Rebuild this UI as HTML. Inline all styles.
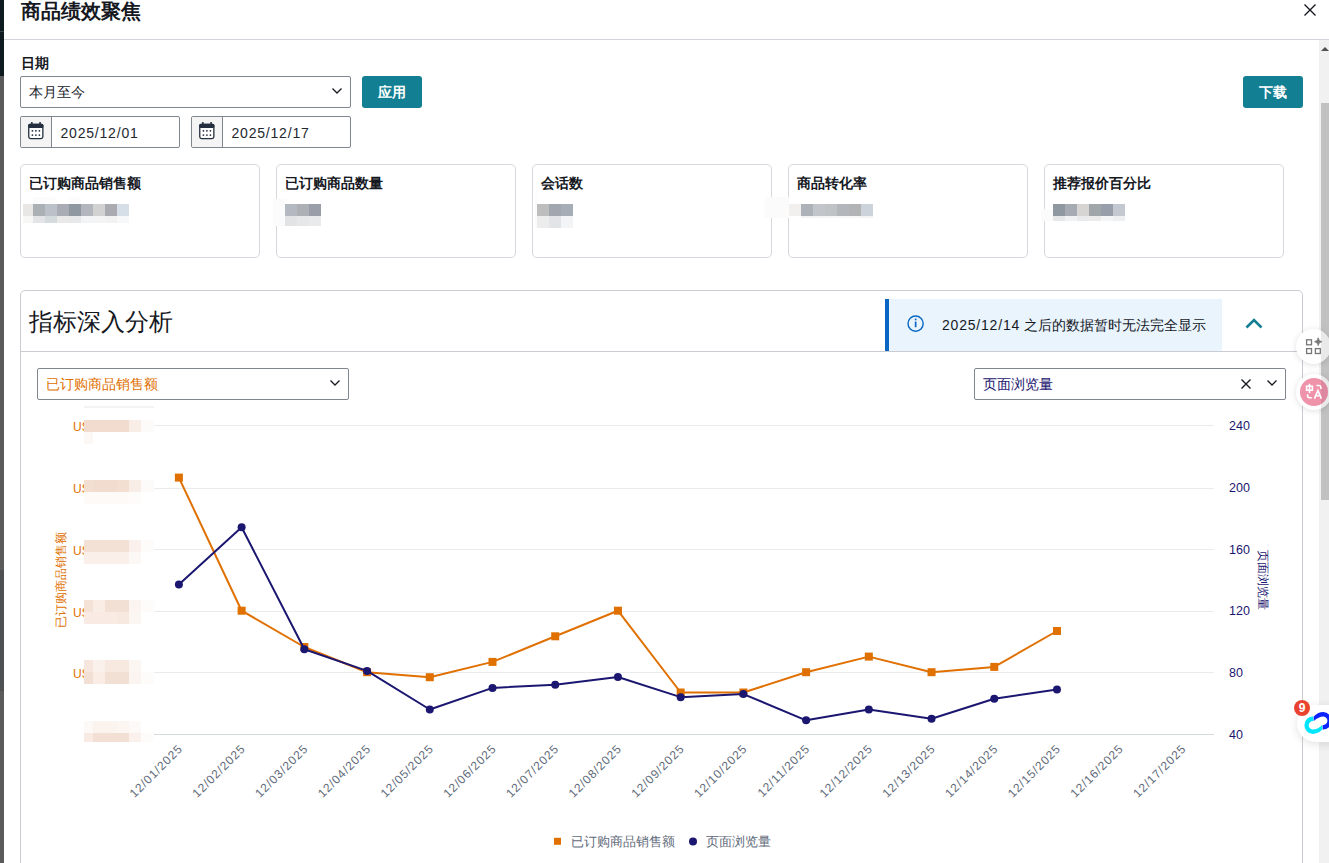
<!DOCTYPE html>
<html><head><meta charset="utf-8">
<style>
*{box-sizing:border-box;margin:0;padding:0}
html,body{width:1329px;height:863px;overflow:hidden;background:#fff;font-family:"Liberation Sans",sans-serif;color:#16191f}
.a{position:absolute}
.t{position:absolute;white-space:nowrap;line-height:1}
.box{position:absolute;border:1px solid #7f868f;border-radius:2px;background:#fff}
.btn{position:absolute;background:#137f92;border-radius:3px;color:#fff;font-weight:700;font-size:14px;line-height:32px;text-align:center}
.card{position:absolute;top:164px;width:240px;height:94px;border:1px solid #d5d9de;border-radius:5px;background:#fff}
.card .ct{position:absolute;left:8px;top:11px;font-size:14px;font-weight:700;line-height:1;white-space:nowrap}
.px{position:absolute}
</style></head><body>
<!-- left dark strip -->
<div class="a" style="left:0;top:0;width:4px;height:76px;background:#0d1b20"></div>
<div class="a" style="left:0;top:31px;width:4px;height:1px;background:#34434a"></div>
<div class="a" style="left:0;top:76px;width:4px;height:787px;background:#5b5b5c"></div>
<div class="a" style="left:0;top:570px;width:4px;height:121px;background:#4f5051"></div>

<!-- header -->
<div class="t" style="left:21px;top:1.5px;font-size:19.5px;font-weight:700;color:#16191f">商品绩效聚焦</div>
<div class="a" style="left:4px;top:39px;width:1325px;height:1px;background:#d1d5db"></div>
<svg class="a" style="left:1303px;top:3px" width="14" height="14" viewBox="0 0 14 14"><path d="M1.5 1.5L12.5 12.5M12.5 1.5L1.5 12.5" stroke="#16191f" stroke-width="1.4"/></svg>

<!-- date -->
<div class="t" style="left:21px;top:55.5px;font-size:14px;font-weight:700">日期</div>
<div class="box" style="left:20px;top:76px;width:331px;height:32px"></div>
<div class="t" style="left:29px;top:85px;font-size:14px">本月至今</div>
<svg class="a" style="left:331px;top:86px" width="12" height="9" viewBox="0 0 12 9"><path d="M1.5 2.5L6 7L10.5 2.5" fill="none" stroke="#16191f" stroke-width="1.3"/></svg>
<div class="btn" style="left:362px;top:76px;width:60px;height:32px">应用</div>
<div class="btn" style="left:1243px;top:76px;width:60px;height:32px">下载</div>

<div class="box" style="left:20px;top:116px;width:160px;height:32px;overflow:hidden"><div class="a" style="left:0;top:0;width:31px;height:30px;background:#f4f4f4;border-right:1px solid #7f868f"></div></div>
<div class="box" style="left:191px;top:116px;width:160px;height:32px;overflow:hidden"><div class="a" style="left:0;top:0;width:31px;height:30px;background:#f4f4f4;border-right:1px solid #7f868f"></div></div>
<svg class="a" style="left:26px;top:120px" width="20" height="22" viewBox="26 120 20 22"><rect x="28.75" y="124.35" width="14.1" height="14.2" rx="1.8" fill="#fff" stroke="#232f3e" stroke-width="1.3"/><rect x="28.2" y="123.8" width="15.2" height="4.3" rx="1.5" fill="#232f3e"/><rect x="31.1" y="122" width="1.5" height="2.5" fill="#232f3e"/><rect x="39.3" y="122" width="1.5" height="2.5" fill="#232f3e"/><g fill="#232f3e"><circle cx="32.4" cy="130.8" r="0.9"/><circle cx="35.9" cy="130.8" r="0.9"/><circle cx="39.4" cy="130.8" r="0.9"/><circle cx="32.4" cy="135.1" r="0.9"/><circle cx="35.9" cy="135.1" r="0.9"/><circle cx="39.4" cy="135.1" r="0.9"/></g></svg>
<svg class="a" style="left:197px;top:120px" width="20" height="22" viewBox="26 120 20 22"><rect x="28.75" y="124.35" width="14.1" height="14.2" rx="1.8" fill="#fff" stroke="#232f3e" stroke-width="1.3"/><rect x="28.2" y="123.8" width="15.2" height="4.3" rx="1.5" fill="#232f3e"/><rect x="31.1" y="122" width="1.5" height="2.5" fill="#232f3e"/><rect x="39.3" y="122" width="1.5" height="2.5" fill="#232f3e"/><g fill="#232f3e"><circle cx="32.4" cy="130.8" r="0.9"/><circle cx="35.9" cy="130.8" r="0.9"/><circle cx="39.4" cy="130.8" r="0.9"/><circle cx="32.4" cy="135.1" r="0.9"/><circle cx="35.9" cy="135.1" r="0.9"/><circle cx="39.4" cy="135.1" r="0.9"/></g></svg>
<div class="t" style="left:60.5px;top:126px;font-size:14px;letter-spacing:0.8px;color:#232830">2025/12/01</div>
<div class="t" style="left:231.5px;top:126px;font-size:14px;letter-spacing:0.8px;color:#232830">2025/12/17</div>

<!-- cards -->
<div class="card" style="left:20px"><div class="ct">已订购商品销售额</div></div>
<div class="card" style="left:276px"><div class="ct">已订购商品数量</div></div>
<div class="card" style="left:532px"><div class="ct">会话数</div></div>
<div class="card" style="left:788px"><div class="ct">商品转化率</div></div>
<div class="card" style="left:1044px"><div class="ct">推荐报价百分比</div></div>

<!-- analysis section -->
<div class="a" style="left:20px;top:290px;width:1283px;height:600px;border:1px solid #c9ccd1;border-radius:5px"></div>
<div class="a" style="left:21px;top:351px;width:1281px;height:1px;background:#c9ccd1"></div>
<div class="t" style="left:29px;top:309.5px;font-size:24px;color:#16191f">指标深入分析</div>
<div class="a" style="left:885px;top:299px;width:337px;height:52px;background:#e9f4fd;border-left:4px solid #0766c4"></div>
<svg class="a" style="left:906px;top:314px" width="20" height="20" viewBox="906 314 20 20"><circle cx="915.6" cy="323.6" r="7.6" fill="none" stroke="#0766c4" stroke-width="1.4"/><rect x="914.8" y="321.6" width="1.7" height="5.6" fill="#0766c4"/><rect x="914.8" y="318.6" width="1.7" height="1.7" fill="#0766c4"/></svg>
<div class="t" style="left:942px;top:318px;font-size:14px"><span style="letter-spacing:0.8px">2025/12/14</span> 之后的数据暂时无法完全显示</div>
<svg class="a" style="left:1244px;top:316px" width="20" height="14" viewBox="0 0 20 14"><path d="M2.5 11.5L10 4L17.5 11.5" fill="none" stroke="#137f92" stroke-width="2.6"/></svg>

<div class="box" style="left:37px;top:368px;width:312px;height:32px"></div>
<div class="t" style="left:46px;top:377px;font-size:14px;color:#e07000">已订购商品销售额</div>
<svg class="a" style="left:329px;top:378px" width="12" height="9" viewBox="0 0 12 9"><path d="M1.5 2.5L6 7L10.5 2.5" fill="none" stroke="#16191f" stroke-width="1.3"/></svg>
<div class="box" style="left:974px;top:368px;width:312px;height:32px"></div>
<div class="t" style="left:983px;top:377px;font-size:14px;color:#1b1670">页面浏览量</div>
<svg class="a" style="left:1240px;top:378px" width="12" height="12" viewBox="0 0 12 12"><path d="M1.5 1.5L10.5 10.5M10.5 1.5L1.5 10.5" stroke="#16191f" stroke-width="1.4"/></svg>
<svg class="a" style="left:1266px;top:378px" width="12" height="9" viewBox="0 0 12 9"><path d="M1.5 2.5L6 7L10.5 2.5" fill="none" stroke="#16191f" stroke-width="1.3"/></svg>

<svg class="a" style="left:0;top:0" width="1329" height="863" viewBox="0 0 1329 863">
<rect x="154" y="425" width="1060" height="1" fill="#e9ebed"/>
<rect x="154" y="488" width="1060" height="1" fill="#e9ebed"/>
<rect x="154" y="549" width="1060" height="1" fill="#e9ebed"/>
<rect x="154" y="611" width="1060" height="1" fill="#e9ebed"/>
<rect x="154" y="672" width="1060" height="1" fill="#e9ebed"/>
<rect x="154" y="734" width="1060" height="1" fill="#d5dbdb"/>
<polyline points="178.90,477.60 241.62,610.70 304.34,647.00 367.06,672.20 429.78,677.20 492.50,661.90 555.22,636.30 617.94,610.70 680.66,692.50 743.38,692.50 806.10,672.20 868.82,656.60 931.54,672.20 994.26,666.90 1056.98,631.00" fill="none" stroke="#e07000" stroke-width="2" stroke-linejoin="round"/>
<rect x="174.90" y="473.60" width="8" height="8" fill="#e07000"/>
<rect x="237.62" y="606.70" width="8" height="8" fill="#e07000"/>
<rect x="300.34" y="643.00" width="8" height="8" fill="#e07000"/>
<rect x="363.06" y="668.20" width="8" height="8" fill="#e07000"/>
<rect x="425.78" y="673.20" width="8" height="8" fill="#e07000"/>
<rect x="488.50" y="657.90" width="8" height="8" fill="#e07000"/>
<rect x="551.22" y="632.30" width="8" height="8" fill="#e07000"/>
<rect x="613.94" y="606.70" width="8" height="8" fill="#e07000"/>
<rect x="676.66" y="688.50" width="8" height="8" fill="#e07000"/>
<rect x="739.38" y="688.50" width="8" height="8" fill="#e07000"/>
<rect x="802.10" y="668.20" width="8" height="8" fill="#e07000"/>
<rect x="864.82" y="652.60" width="8" height="8" fill="#e07000"/>
<rect x="927.54" y="668.20" width="8" height="8" fill="#e07000"/>
<rect x="990.26" y="662.90" width="8" height="8" fill="#e07000"/>
<rect x="1052.98" y="627.00" width="8" height="8" fill="#e07000"/>
<polyline points="178.90,584.43 241.62,527.30 304.34,649.28 367.06,670.90 429.78,709.50 492.50,687.88 555.22,684.79 617.94,677.07 680.66,697.14 743.38,694.06 806.10,720.30 868.82,709.50 931.54,718.76 994.26,698.69 1056.98,689.42" fill="none" stroke="#1b1670" stroke-width="2" stroke-linejoin="round"/>
<circle cx="178.90" cy="584.43" r="4" fill="#1b1670"/>
<circle cx="241.62" cy="527.30" r="4" fill="#1b1670"/>
<circle cx="304.34" cy="649.28" r="4" fill="#1b1670"/>
<circle cx="367.06" cy="670.90" r="4" fill="#1b1670"/>
<circle cx="429.78" cy="709.50" r="4" fill="#1b1670"/>
<circle cx="492.50" cy="687.88" r="4" fill="#1b1670"/>
<circle cx="555.22" cy="684.79" r="4" fill="#1b1670"/>
<circle cx="617.94" cy="677.07" r="4" fill="#1b1670"/>
<circle cx="680.66" cy="697.14" r="4" fill="#1b1670"/>
<circle cx="743.38" cy="694.06" r="4" fill="#1b1670"/>
<circle cx="806.10" cy="720.30" r="4" fill="#1b1670"/>
<circle cx="868.82" cy="709.50" r="4" fill="#1b1670"/>
<circle cx="931.54" cy="718.76" r="4" fill="#1b1670"/>
<circle cx="994.26" cy="698.69" r="4" fill="#1b1670"/>
<circle cx="1056.98" cy="689.42" r="4" fill="#1b1670"/>
<text x="1229" y="430.10" font-size="12.5" fill="#1b1670" font-family="Liberation Sans">240</text>
<text x="1229" y="491.86" font-size="12.5" fill="#1b1670" font-family="Liberation Sans">200</text>
<text x="1229" y="553.62" font-size="12.5" fill="#1b1670" font-family="Liberation Sans">160</text>
<text x="1229" y="615.38" font-size="12.5" fill="#1b1670" font-family="Liberation Sans">120</text>
<text x="1229" y="677.14" font-size="12.5" fill="#1b1670" font-family="Liberation Sans">80</text>
<text x="1229" y="738.90" font-size="12.5" fill="#1b1670" font-family="Liberation Sans">40</text>
<text x="73" y="431.40" font-size="12" fill="#e07000" font-family="Liberation Sans">US</text>
<text x="73" y="493.16" font-size="12" fill="#e07000" font-family="Liberation Sans">US</text>
<text x="73" y="554.92" font-size="12" fill="#e07000" font-family="Liberation Sans">US</text>
<text x="73" y="616.68" font-size="12" fill="#e07000" font-family="Liberation Sans">US</text>
<text x="73" y="678.44" font-size="12" fill="#e07000" font-family="Liberation Sans">US</text>
<text transform="translate(183.40,749.50) rotate(-45)" text-anchor="end" letter-spacing="0.9" font-size="12" fill="#5f6b7a" font-family="Liberation Sans">12/01/2025</text>
<text transform="translate(246.12,749.50) rotate(-45)" text-anchor="end" letter-spacing="0.9" font-size="12" fill="#5f6b7a" font-family="Liberation Sans">12/02/2025</text>
<text transform="translate(308.84,749.50) rotate(-45)" text-anchor="end" letter-spacing="0.9" font-size="12" fill="#5f6b7a" font-family="Liberation Sans">12/03/2025</text>
<text transform="translate(371.56,749.50) rotate(-45)" text-anchor="end" letter-spacing="0.9" font-size="12" fill="#5f6b7a" font-family="Liberation Sans">12/04/2025</text>
<text transform="translate(434.28,749.50) rotate(-45)" text-anchor="end" letter-spacing="0.9" font-size="12" fill="#5f6b7a" font-family="Liberation Sans">12/05/2025</text>
<text transform="translate(497.00,749.50) rotate(-45)" text-anchor="end" letter-spacing="0.9" font-size="12" fill="#5f6b7a" font-family="Liberation Sans">12/06/2025</text>
<text transform="translate(559.72,749.50) rotate(-45)" text-anchor="end" letter-spacing="0.9" font-size="12" fill="#5f6b7a" font-family="Liberation Sans">12/07/2025</text>
<text transform="translate(622.44,749.50) rotate(-45)" text-anchor="end" letter-spacing="0.9" font-size="12" fill="#5f6b7a" font-family="Liberation Sans">12/08/2025</text>
<text transform="translate(685.16,749.50) rotate(-45)" text-anchor="end" letter-spacing="0.9" font-size="12" fill="#5f6b7a" font-family="Liberation Sans">12/09/2025</text>
<text transform="translate(747.88,749.50) rotate(-45)" text-anchor="end" letter-spacing="0.9" font-size="12" fill="#5f6b7a" font-family="Liberation Sans">12/10/2025</text>
<text transform="translate(810.60,749.50) rotate(-45)" text-anchor="end" letter-spacing="0.9" font-size="12" fill="#5f6b7a" font-family="Liberation Sans">12/11/2025</text>
<text transform="translate(873.32,749.50) rotate(-45)" text-anchor="end" letter-spacing="0.9" font-size="12" fill="#5f6b7a" font-family="Liberation Sans">12/12/2025</text>
<text transform="translate(936.04,749.50) rotate(-45)" text-anchor="end" letter-spacing="0.9" font-size="12" fill="#5f6b7a" font-family="Liberation Sans">12/13/2025</text>
<text transform="translate(998.76,749.50) rotate(-45)" text-anchor="end" letter-spacing="0.9" font-size="12" fill="#5f6b7a" font-family="Liberation Sans">12/14/2025</text>
<text transform="translate(1061.48,749.50) rotate(-45)" text-anchor="end" letter-spacing="0.9" font-size="12" fill="#5f6b7a" font-family="Liberation Sans">12/15/2025</text>
<text transform="translate(1124.20,749.50) rotate(-45)" text-anchor="end" letter-spacing="0.9" font-size="12" fill="#5f6b7a" font-family="Liberation Sans">12/16/2025</text>
<text transform="translate(1186.92,749.50) rotate(-45)" text-anchor="end" letter-spacing="0.9" font-size="12" fill="#5f6b7a" font-family="Liberation Sans">12/17/2025</text>
<text transform="translate(65,580) rotate(-90)" text-anchor="middle" font-size="12" fill="#e07000" font-family="Liberation Sans">已订购商品销售额</text>
<text transform="translate(1259,580) rotate(90)" text-anchor="middle" font-size="12" fill="#1b1670" font-family="Liberation Sans">页面浏览量</text>
<rect x="554" y="837.8" width="7" height="7" fill="#e07000"/>
<text x="571" y="846" font-size="12.7" fill="#5f6b7a" font-family="Liberation Sans">已订购商品销售额</text>
<circle cx="693" cy="841.5" r="4" fill="#1b1670"/>
<text x="706" y="846" font-size="12.7" fill="#5f6b7a" font-family="Liberation Sans">页面浏览量</text>
</svg>
<div class="px" style="left:23px;top:204px;width:10px;height:12px;background:#e8e7e5"></div>
<div class="px" style="left:23px;top:216px;width:10px;height:7px;background:#f7f7f5"></div>
<div class="px" style="left:33px;top:204px;width:12px;height:12px;background:#aab0b3"></div>
<div class="px" style="left:45px;top:204px;width:12px;height:12px;background:#bcc1c9"></div>
<div class="px" style="left:57px;top:204px;width:12px;height:12px;background:#a9acb5"></div>
<div class="px" style="left:69px;top:204px;width:12px;height:12px;background:#8f98a1"></div>
<div class="px" style="left:81px;top:204px;width:12px;height:12px;background:#b3b7bd"></div>
<div class="px" style="left:93px;top:204px;width:12px;height:12px;background:#d2d2d2"></div>
<div class="px" style="left:105px;top:204px;width:12px;height:12px;background:#a9abb0"></div>
<div class="px" style="left:117px;top:204px;width:12px;height:12px;background:#d6dfe8"></div>
<div class="px" style="left:33px;top:216px;width:12px;height:7px;background:#e3e4e6"></div>
<div class="px" style="left:45px;top:216px;width:12px;height:7px;background:#d5dadd"></div>
<div class="px" style="left:57px;top:216px;width:12px;height:7px;background:#e9e9ea"></div>
<div class="px" style="left:69px;top:216px;width:12px;height:7px;background:#e7e8ea"></div>
<div class="px" style="left:81px;top:216px;width:12px;height:7px;background:#f3f4f6"></div>
<div class="px" style="left:93px;top:216px;width:12px;height:7px;background:#f4f4f4"></div>
<div class="px" style="left:105px;top:216px;width:12px;height:7px;background:#f2f2f2"></div>
<div class="px" style="left:117px;top:216px;width:12px;height:7px;background:#f6f8fa"></div>
<div class="px" style="left:33px;top:197px;width:12px;height:7px;background:#fbfbfb"></div>
<div class="px" style="left:45px;top:197px;width:12px;height:7px;background:#fcfcfc"></div>
<div class="px" style="left:69px;top:197px;width:12px;height:7px;background:#fcfcfc"></div>
<div class="px" style="left:273px;top:199px;width:12px;height:27px;background:#fbfbfb"></div>
<div class="px" style="left:285px;top:204px;width:12px;height:12px;background:#b4b8c1"></div>
<div class="px" style="left:297px;top:204px;width:12px;height:12px;background:#adb1b5"></div>
<div class="px" style="left:309px;top:204px;width:12px;height:12px;background:#9a9ea8"></div>
<div class="px" style="left:285px;top:216px;width:12px;height:10px;background:#e2e3e5"></div>
<div class="px" style="left:297px;top:216px;width:12px;height:10px;background:#e6e7e9"></div>
<div class="px" style="left:309px;top:216px;width:12px;height:10px;background:#e9eaeb"></div>
<div class="px" style="left:535px;top:197px;width:2px;height:31px;background:#fbfbfb"></div>
<div class="px" style="left:537px;top:204px;width:12px;height:12px;background:#bdbdbd"></div>
<div class="px" style="left:549px;top:204px;width:12px;height:12px;background:#a2a6ae"></div>
<div class="px" style="left:561px;top:204px;width:12px;height:12px;background:#a5aeb7"></div>
<div class="px" style="left:537px;top:216px;width:12px;height:12px;background:#ececec"></div>
<div class="px" style="left:549px;top:216px;width:12px;height:12px;background:#e3e4e8"></div>
<div class="px" style="left:561px;top:216px;width:12px;height:12px;background:#f3f4f6"></div>
<div class="px" style="left:765px;top:197px;width:24px;height:21px;background:#fbfbfb"></div>
<div class="px" style="left:789px;top:204px;width:12px;height:12px;background:#f1f0ef"></div>
<div class="px" style="left:801px;top:204px;width:12px;height:12px;background:#adb2b9"></div>
<div class="px" style="left:813px;top:204px;width:12px;height:12px;background:#c2c5c9"></div>
<div class="px" style="left:825px;top:204px;width:12px;height:12px;background:#c0c3c6"></div>
<div class="px" style="left:837px;top:204px;width:12px;height:12px;background:#b3b6ba"></div>
<div class="px" style="left:849px;top:204px;width:12px;height:12px;background:#b2b3b5"></div>
<div class="px" style="left:861px;top:204px;width:12px;height:12px;background:#cdd3da"></div>
<div class="px" style="left:801px;top:216px;width:12px;height:2px;background:#f3f3f5"></div>
<div class="px" style="left:813px;top:216px;width:12px;height:2px;background:#f5f4f6"></div>
<div class="px" style="left:825px;top:216px;width:12px;height:2px;background:#f6f6f7"></div>
<div class="px" style="left:837px;top:216px;width:12px;height:2px;background:#f7f7f8"></div>
<div class="px" style="left:849px;top:216px;width:12px;height:2px;background:#f7f7f8"></div>
<div class="px" style="left:861px;top:216px;width:12px;height:2px;background:#f3f3f5"></div>
<div class="px" style="left:1041px;top:209px;width:12px;height:12px;background:#fbfbfb"></div>
<div class="px" style="left:1053px;top:204px;width:12px;height:12px;background:#8f97a0"></div>
<div class="px" style="left:1065px;top:204px;width:12px;height:12px;background:#a5aab3"></div>
<div class="px" style="left:1077px;top:204px;width:12px;height:12px;background:#d6d5d3"></div>
<div class="px" style="left:1089px;top:204px;width:12px;height:12px;background:#a1a6ab"></div>
<div class="px" style="left:1101px;top:204px;width:12px;height:12px;background:#989fab"></div>
<div class="px" style="left:1113px;top:204px;width:12px;height:12px;background:#c4c8d0"></div>
<div class="px" style="left:1053px;top:216px;width:12px;height:5px;background:#e6e7e9"></div>
<div class="px" style="left:1065px;top:216px;width:12px;height:5px;background:#f1f2f3"></div>
<div class="px" style="left:1077px;top:216px;width:12px;height:5px;background:#e9eaec"></div>
<div class="px" style="left:1089px;top:216px;width:12px;height:5px;background:#ebebeb"></div>
<div class="px" style="left:1101px;top:216px;width:12px;height:5px;background:#f4f5f6"></div>
<div class="px" style="left:1113px;top:216px;width:12px;height:5px;background:#eeeff1"></div>
<div class="px" style="left:84px;top:420px;width:9px;height:12px;background:#f2dccf"></div>
<div class="px" style="left:93px;top:420px;width:12px;height:12px;background:#f2dccf"></div>
<div class="px" style="left:105px;top:420px;width:12px;height:12px;background:#f2dccf"></div>
<div class="px" style="left:117px;top:420px;width:12px;height:12px;background:#f2dccf"></div>
<div class="px" style="left:129px;top:420px;width:12px;height:12px;background:#f8ede7"></div>
<div class="px" style="left:141px;top:420px;width:13px;height:12px;background:#fdfbfa"></div>
<div class="px" style="left:84px;top:432px;width:9px;height:12px;background:#fbf8f6"></div>
<div class="px" style="left:84px;top:480px;width:9px;height:12px;background:#f3ded2"></div>
<div class="px" style="left:93px;top:480px;width:12px;height:12px;background:#f2dccf"></div>
<div class="px" style="left:105px;top:480px;width:12px;height:12px;background:#f2dccf"></div>
<div class="px" style="left:117px;top:480px;width:12px;height:12px;background:#f3ded2"></div>
<div class="px" style="left:129px;top:480px;width:12px;height:12px;background:#f8ede7"></div>
<div class="px" style="left:141px;top:480px;width:13px;height:12px;background:#fdfbfa"></div>
<div class="px" style="left:84px;top:492px;width:9px;height:12px;background:#fdfaf8"></div>
<div class="px" style="left:93px;top:492px;width:12px;height:12px;background:#fdfaf8"></div>
<div class="px" style="left:105px;top:492px;width:12px;height:12px;background:#fdfaf8"></div>
<div class="px" style="left:117px;top:492px;width:12px;height:12px;background:#fdfaf8"></div>
<div class="px" style="left:129px;top:492px;width:12px;height:12px;background:#fefcfb"></div>
<div class="px" style="left:84px;top:540px;width:9px;height:12px;background:#f4e1d6"></div>
<div class="px" style="left:93px;top:540px;width:12px;height:12px;background:#f4e1d6"></div>
<div class="px" style="left:105px;top:540px;width:12px;height:12px;background:#f4e1d6"></div>
<div class="px" style="left:117px;top:540px;width:12px;height:12px;background:#f4e1d6"></div>
<div class="px" style="left:129px;top:540px;width:12px;height:12px;background:#faf1ec"></div>
<div class="px" style="left:141px;top:540px;width:13px;height:12px;background:#fefcfb"></div>
<div class="px" style="left:84px;top:552px;width:9px;height:12px;background:#faefe9"></div>
<div class="px" style="left:93px;top:552px;width:12px;height:12px;background:#faefe9"></div>
<div class="px" style="left:105px;top:552px;width:12px;height:12px;background:#faefe9"></div>
<div class="px" style="left:117px;top:552px;width:12px;height:12px;background:#faefe9"></div>
<div class="px" style="left:129px;top:552px;width:12px;height:12px;background:#fcf8f5"></div>
<div class="px" style="left:84px;top:600px;width:9px;height:12px;background:#f4e2d7"></div>
<div class="px" style="left:93px;top:600px;width:12px;height:12px;background:#f9ede6"></div>
<div class="px" style="left:105px;top:600px;width:12px;height:12px;background:#f3e0d5"></div>
<div class="px" style="left:117px;top:600px;width:12px;height:12px;background:#f3e0d5"></div>
<div class="px" style="left:129px;top:600px;width:12px;height:12px;background:#fbf4f0"></div>
<div class="px" style="left:141px;top:600px;width:13px;height:12px;background:#fefcfb"></div>
<div class="px" style="left:84px;top:612px;width:9px;height:12px;background:#f9ebe3"></div>
<div class="px" style="left:93px;top:612px;width:12px;height:12px;background:#f9ebe3"></div>
<div class="px" style="left:105px;top:612px;width:12px;height:12px;background:#f9ebe3"></div>
<div class="px" style="left:117px;top:612px;width:12px;height:12px;background:#f7e8e0"></div>
<div class="px" style="left:129px;top:612px;width:12px;height:12px;background:#fcf6f2"></div>
<div class="px" style="left:84px;top:660px;width:9px;height:12px;background:#f7e6dd"></div>
<div class="px" style="left:93px;top:660px;width:12px;height:12px;background:#fbf1ec"></div>
<div class="px" style="left:105px;top:660px;width:12px;height:12px;background:#f7e8e0"></div>
<div class="px" style="left:117px;top:660px;width:12px;height:12px;background:#f7e8e0"></div>
<div class="px" style="left:129px;top:660px;width:12px;height:12px;background:#fcf6f3"></div>
<div class="px" style="left:84px;top:672px;width:9px;height:12px;background:#f3e0d5"></div>
<div class="px" style="left:93px;top:672px;width:12px;height:12px;background:#f9ede6"></div>
<div class="px" style="left:105px;top:672px;width:12px;height:12px;background:#f3e0d5"></div>
<div class="px" style="left:117px;top:672px;width:12px;height:12px;background:#f3e0d5"></div>
<div class="px" style="left:129px;top:672px;width:12px;height:12px;background:#fbf4f0"></div>
<div class="px" style="left:141px;top:672px;width:13px;height:12px;background:#fdfcfb"></div>
<div class="px" style="left:84px;top:721px;width:9px;height:12px;background:#fdf9f7"></div>
<div class="px" style="left:93px;top:721px;width:12px;height:12px;background:#fbf3ee"></div>
<div class="px" style="left:105px;top:721px;width:12px;height:12px;background:#fbf3ee"></div>
<div class="px" style="left:117px;top:721px;width:12px;height:12px;background:#fcf6f3"></div>
<div class="px" style="left:129px;top:721px;width:12px;height:12px;background:#fdf9f7"></div>
<div class="px" style="left:84px;top:733px;width:9px;height:9px;background:#f8ebe3"></div>
<div class="px" style="left:93px;top:733px;width:12px;height:9px;background:#f3dfd3"></div>
<div class="px" style="left:105px;top:733px;width:12px;height:9px;background:#f3dfd3"></div>
<div class="px" style="left:117px;top:733px;width:12px;height:9px;background:#f3e0d5"></div>
<div class="px" style="left:129px;top:733px;width:12px;height:9px;background:#faf1ec"></div>
<div class="px" style="left:141px;top:733px;width:13px;height:9px;background:#fdfcfb"></div>
<div class="px" style="left:84px;top:406px;width:70px;height:2px;background:#f2f3f3"></div>

<!-- scrollbar -->
<div class="a" style="left:1319px;top:40px;width:10px;height:823px;background:#f1f1f1"></div>
<svg class="a" style="left:1319px;top:44px" width="10" height="8" viewBox="0 0 10 8"><path d="M2 7L6 3L10 7Z" fill="#505050"/></svg>
<div class="a" style="left:1321px;top:103px;width:8px;height:397px;background:#c1c1c1"></div>


<!-- extension widgets -->
<div class="a" style="left:1295.5px;top:328.5px;width:35px;height:35px;border-radius:50%;background:#fff;box-shadow:0 1px 6px rgba(0,0,0,0.13);overflow:hidden"><div class="a" style="left:25.5px;top:0;width:10px;height:35px;background:rgba(0,0,0,0.085)"></div></div>
<svg class="a" style="left:1300px;top:333px" width="26" height="26" viewBox="1300 333 26 26"><g fill="none" stroke="#767676" stroke-width="1.3"><rect x="1306.6" y="339.8" width="4.9" height="5"/><rect x="1306.6" y="348.6" width="4.9" height="4.9"/><rect x="1315.4" y="348.6" width="4.9" height="4.9"/></g><path d="M1318.2 337.8Q1318.6 341.3 1321.9 341.7Q1318.6 342.1 1318.2 345.6Q1317.8 342.1 1314.5 341.7Q1317.8 341.3 1318.2 337.8Z" fill="#767676" stroke="#767676" stroke-width="0.8" stroke-linejoin="round"/></svg>

<div class="a" style="left:1295.5px;top:374px;width:36px;height:36px;border-radius:50%;background:#fff;box-shadow:0 1px 6px rgba(0,0,0,0.13);overflow:hidden"><div class="a" style="left:25.5px;top:0;width:11px;height:36px;background:rgba(0,0,0,0.085)"></div></div>
<div class="a" style="left:1300px;top:378px;width:28px;height:28px;border-radius:50%;background:#ef93ab;overflow:hidden"><div class="a" style="left:21px;top:0;width:10px;height:28px;background:rgba(0,0,0,0.075)"></div></div>
<svg class="a" style="left:1300px;top:378px" width="28" height="28" viewBox="1300 378 28 28"><g fill="none" stroke="#fff" stroke-width="1.6"><rect x="1306.6" y="386.2" width="5.8" height="4"/><path d="M1309.5 383.8V393"/><path d="M1316.4 385.5H1319.2Q1320.8 385.5 1320.8 387.2V389"/><path d="M1307.6 394.3V395.8Q1307.6 397.7 1309.5 397.7H1311.8"/><path d="M1314.4 398.6L1317.9 390.6L1321.4 398.6M1315.6 395.8H1320.2"/></g></svg>

<div class="a" style="left:1296.5px;top:704.5px;width:60px;height:37.5px;border-radius:19px;background:#fff;box-shadow:0 2px 10px rgba(0,0,0,0.12)"></div>
<svg class="a" style="left:1296px;top:706px" width="33" height="34" viewBox="1296 706 33 34"><path d="M1313.4 716.5A8.7 8.7 0 1 0 1312.8 733.9Q1318 733.9 1322.3 729.6L1322.3 725Q1317.5 729.5 1312.6 729.5A4.3 4.3 0 1 1 1313.4 720.9Z" fill="#00e6fc"/><path d="M1313.4 716.5A8.7 8.7 0 1 0 1312.8 733.9Q1318 733.9 1322.3 729.6L1322.3 725Q1317.5 729.5 1312.6 729.5A4.3 4.3 0 1 1 1313.4 720.9Z" fill="#0a23ff" transform="rotate(180 1318.05 723)"/></svg>
<div class="a" style="left:1294px;top:700px;width:16px;height:16px;border-radius:50%;background:#e9432f;color:#fff;font-size:12px;font-weight:700;line-height:16px;text-align:center">9</div>

</body></html>
